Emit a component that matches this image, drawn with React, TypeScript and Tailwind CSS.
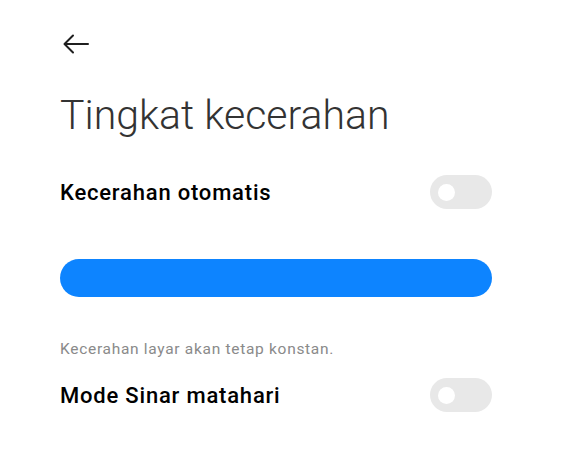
import React from 'react';

const Toggle: React.FC = () => (
  <div className="flex h-[34px] w-[62px] items-center rounded-full bg-[#e8e8e8] pl-[8px]">
    <div className="h-[17px] w-[17px] rounded-full bg-white" />
  </div>
);

export default function App() {
  return (
    <div className="h-[465px] w-[581px] bg-white font-['Roboto',sans-serif]">
      <div className="pl-[60px] pr-[89px]">
        <div className="pt-[32px]">
          <svg width="30" height="24" viewBox="0 0 30 24" fill="none" stroke="#1f1f1f" strokeWidth="2" strokeLinecap="round" strokeLinejoin="round">
            <path d="M5 12h23" />
            <path d="M13 3.5L4.5 12L13 20.5" />
          </svg>
        </div>
        <h1 className="mt-[35px] text-[41px] font-light leading-[48px] text-[#333]">Tingkat kecerahan</h1>
        <div className="mt-[36px] flex items-center justify-between">
          <span className="text-[22px] font-medium tracking-[0.8px] text-black">Kecerahan otomatis</span>
          <Toggle />
        </div>
        <div className="mt-[50px] h-[38px] w-full rounded-full bg-[#0d84ff]" />
        <p className="mt-[42px] text-[15.5px] leading-[20px] tracking-[0.7px] text-[#8a8a8a]">Kecerahan layar akan tetap konstan.</p>
        <div className="mt-[19px] flex items-center justify-between">
          <span className="text-[22px] font-medium tracking-[0.8px] text-black">Mode Sinar matahari</span>
          <Toggle />
        </div>
      </div>
    </div>
  );
}
